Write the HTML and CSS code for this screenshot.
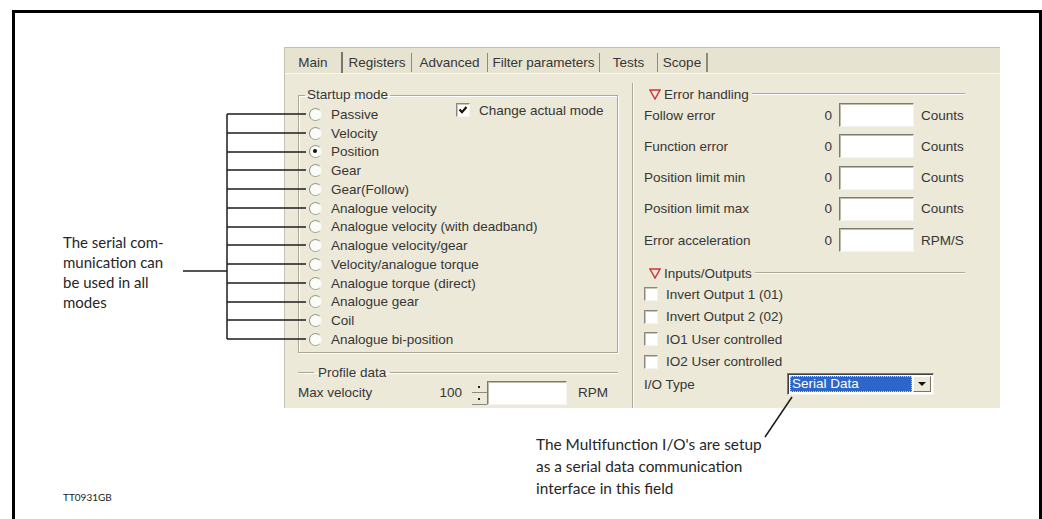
FILE: index.html
```html
<!DOCTYPE html>
<html lang="en">

<head>
   <meta charset="UTF-8">
   <meta name="viewport" content="width=device-width, initial-scale=1.0">
   <title>TT0931GB - Serial data setup</title>
   <link rel="stylesheet" href="styles.css">
</head>

<body>
   <div class="frame">
      <div class="figure">
         <p class="note note-left">The serial com-<br>munication can<br>be used in all<br>modes</p>

         <div class="dialog">
            <div class="tabs">
               <span class="tab tab-main">Main</span>
               <span class="tab tab-reg">Registers</span>
               <span class="tab tab-adv">Advanced</span>
               <span class="tab tab-filter">Filter parameters</span>
               <span class="tab tab-tests">Tests</span>
               <span class="tab tab-scope">Scope</span>
            </div>

            <div class="pages">
               <div class="col-left">
                  <fieldset class="group startup">
                     <legend>Startup mode</legend>
                     <div class="startup-grid">
                        <ul class="radios">
                           <li><span class="radio"></span>Passive</li>
                           <li><span class="radio"></span>Velocity</li>
                           <li><span class="radio on"></span>Position</li>
                           <li><span class="radio"></span>Gear</li>
                           <li><span class="radio"></span>Gear(Follow)</li>
                           <li><span class="radio"></span>Analogue velocity</li>
                           <li><span class="radio"></span>Analogue velocity (with deadband)</li>
                           <li><span class="radio"></span>Analogue velocity/gear</li>
                           <li><span class="radio"></span>Velocity/analogue torque</li>
                           <li><span class="radio"></span>Analogue torque (direct)</li>
                           <li><span class="radio"></span>Analogue gear</li>
                           <li><span class="radio"></span>Coil</li>
                           <li><span class="radio"></span>Analogue bi-position</li>
                        </ul>
                        <div class="check check-mode">
                           <span class="box">
                              <svg width="10" height="10" viewBox="0 0 10 10"><path d="M1.5 4.5 L4 7.2 L8.5 2" fill="none" stroke="#111" stroke-width="2.2"/></svg>
                           </span>
                           Change actual mode
                        </div>
                     </div>
                  </fieldset>

                  <fieldset class="group profile">
                     <legend>Profile data</legend>
                     <div class="prof-row">
                        <span class="prof-label">Max velocity</span>
                        <span class="prof-val">100</span>
                        <span class="spin"><i class="up"></i><i class="down"></i></span>
                        <span class="field field-prof"></span>
                        <span class="prof-unit">RPM</span>
                     </div>
                  </fieldset>
               </div>

               <div class="col-right">
                  <div class="heading">
                     <svg class="tri" width="12" height="11" viewBox="0 0 12 11"><polygon points="1,1 11,1 6,10" fill="none" stroke="#d0303a" stroke-width="1.4"/></svg>
                     <span>Error handling</span>
                     <span class="rule"></span>
                  </div>

                  <div class="rows">
                     <div class="row"><span class="lbl">Follow error</span><span class="val">0</span><span class="field"></span><span class="unit">Counts</span></div>
                     <div class="row"><span class="lbl">Function error</span><span class="val">0</span><span class="field"></span><span class="unit">Counts</span></div>
                     <div class="row"><span class="lbl">Position limit min</span><span class="val">0</span><span class="field"></span><span class="unit">Counts</span></div>
                     <div class="row"><span class="lbl">Position limit max</span><span class="val">0</span><span class="field"></span><span class="unit">Counts</span></div>
                     <div class="row"><span class="lbl">Error acceleration</span><span class="val">0</span><span class="field"></span><span class="unit">RPM/S</span></div>
                  </div>

                  <div class="heading heading-io">
                     <svg class="tri" width="12" height="11" viewBox="0 0 12 11"><polygon points="1,1 11,1 6,10" fill="none" stroke="#d0303a" stroke-width="1.4"/></svg>
                     <span>Inputs/Outputs</span>
                     <span class="rule"></span>
                  </div>

                  <ul class="checks">
                     <li><span class="box"></span>Invert Output 1 (01)</li>
                     <li><span class="box"></span>Invert Output 2 (02)</li>
                     <li><span class="box"></span>IO1 User controlled</li>
                     <li><span class="box"></span>IO2 User controlled</li>
                  </ul>

                  <div class="io-row">
                     <span class="io-label">I/O Type</span>
                     <span class="combo">
                        <span class="combo-sel">Serial Data</span>
                        <span class="combo-btn"><i></i></span>
                     </span>
                  </div>
               </div>
            </div>
         </div>
      </div>

      <div class="foot">
         <span class="fig-id">TT0931GB</span>
         <p class="note note-right">The Multifunction I/O's are setup<br>as a serial data communication<br>interface in this field</p>
      </div>
   </div>

   <!-- callout lines drawn over the figure -->
   <svg class="callouts" width="1042" height="519" viewBox="0 0 1042 519">
      <g stroke="#1c1c1c" stroke-width="1.5" fill="none">
         <path d="M227 114 V339"/>
         <path d="M183 271 H227"/>
         <path d="M227 114 H306 M227 133 H306 M227 152 H306 M227 170 H306 M227 189 H306 M227 208 H306 M227 227 H306"/>
         <path d="M227 245 H306 M227 264 H306 M227 283 H306 M227 302 H306 M227 320 H306 M227 339 H306"/>
         <path d="M792 397 L765 437"/>
      </g>
   </svg>
</body>

</html>
```

FILE: styles.css
```css
html,
body {
   margin: 0;
   height: 519px;
   overflow: hidden;
   background: #fff;
   font-family: Lato, 'Open Sans', sans-serif;
}

body {
   position: relative;
}

.frame {
   margin: 10px 0 0 12px;
   width: 1030px;
   height: 509px;
   box-sizing: border-box;
   border: 3px solid #000;
   border-bottom: 0;
}

.figure {
   display: grid;
   grid-template-columns: 269px 716px;
   padding-top: 34px;
}

.note {
   margin: 0;
   color: #262626;
   font-size: 15px;
}

.note-left {
   margin: 185px 0 0 48px;
   line-height: 20px;
}

.foot {
   display: flex;
   margin-top: 25px;
}

.fig-id {
   box-sizing: border-box;
   width: 521px;
   padding: 57px 0 0 48px;
   font-size: 10px;
   line-height: 14px;
   color: #222;
}

.note-right {
   font-size: 15.4px;
   line-height: 22px;
}

.callouts {
   position: absolute;
   top: 0;
   left: 0;
   pointer-events: none;
}

/* dialog */

.dialog {
   box-sizing: border-box;
   height: 361px;
   background: #ece9d8;
   border-top: 1px solid #c4c1b0;
   border-left: 1px solid #c4c1b0;
   font-family: 'Liberation Sans', Arial, sans-serif;
   font-size: 13.5px;
   color: #363636;
}

.tabs {
   display: flex;
   height: 25px;
   background: #e6e3d1;
   border-bottom: 1px solid #faf8f0;
}

.tab {
   display: flex;
   align-items: center;
   justify-content: center;
   box-sizing: border-box;
   height: 19px;
   margin-top: 5px;
   border-right: 1px solid #8e8b7d;
   white-space: nowrap;
}

.tab-main {
   width: 58px;
   height: 21px;
   margin-top: 4px;
   border-right: 2px solid #77756a;
}

.tab-reg { width: 69px; }
.tab-adv { width: 76px; }
.tab-filter { width: 112px; }
.tab-tests { width: 58px; }
.tab-scope { width: 50px; border-right-width: 2px; }

.pages {
   display: flex;
   height: 334px;
}

.col-left {
   width: 347px;
}

.group {
   box-sizing: border-box;
   width: 320px;
   min-width: 0;
   margin: 0 0 0 13px;
}

.group legend {
   line-height: 16px;
}

.startup {
   margin-top: 13px;
   padding: 2px 0 3px 10px;
   border: 1px solid #aaa797;
   box-shadow: inset 1px 1px #fff, 1px 1px #fff;
}

.startup legend {
   margin-left: -4px;
   padding: 0 2px;
}

.startup-grid {
   display: grid;
   grid-template-columns: 147px auto;
}

.radios {
   margin: 0;
   padding: 0;
   list-style: none;
}

.radios li {
   display: flex;
   align-items: center;
   height: 18.75px;
   white-space: nowrap;
}

.radio {
   position: relative;
   flex: none;
   box-sizing: border-box;
   width: 13px;
   height: 13px;
   margin-right: 9px;
   border-radius: 50%;
   border: 1.5px solid;
   border-color: #9a988a #f2f1ea #a6a496 #8a887a;
   background: #fbfbf7;
}

.radio.on::after {
   content: '';
   position: absolute;
   top: 3px;
   left: 3px;
   width: 4px;
   height: 4px;
   border-radius: 50%;
   background: #111;
}

.check {
   display: flex;
   align-items: center;
   white-space: nowrap;
}

.check-mode {
   align-self: start;
   height: 14px;
   margin-top: -2px;
}

.box {
   display: flex;
   flex: none;
   align-items: center;
   justify-content: center;
   box-sizing: border-box;
   width: 14px;
   height: 14px;
   margin-right: 9px;
   background: #fff;
   border: 1px solid;
   border-color: #8a887a #f4f3ee #f4f3ee #8a887a;
   box-shadow: inset 1px 1px #c9c6b7;
}

.profile {
   margin-top: 12px;
   padding: 0;
   border: 0;
   border-top: 1px solid #aaa797;
   box-shadow: inset 0 1px #fff;
}

.profile legend {
   margin-left: 16px;
   padding: 0 4px;
}

.prof-row {
   display: flex;
   align-items: center;
   height: 24px;
}

.prof-label {
   width: 140px;
}

.prof-val {
   width: 24px;
   text-align: right;
}

.spin {
   display: flex;
   flex-direction: column;
   width: 15px;
   height: 24px;
   margin-left: 10px;
}

.spin i {
   flex: 1;
   position: relative;
   border-bottom: 1px solid #8e8b7d;
}

.spin i::after {
   content: '';
   position: absolute;
   left: 6px;
   top: 5px;
   width: 2px;
   height: 2px;
   background: #222;
}

.field {
   box-sizing: border-box;
   width: 75px;
   height: 24px;
   margin-left: 7px;
   background: #fff;
   border: 1px solid;
   border-color: #7d7b6e #f4f3ee #f4f3ee #7d7b6e;
   box-shadow: inset 1px 1px #c0bdae;
}

.field-prof {
   width: 80px;
   margin-left: 0;
}

.prof-unit {
   margin-left: 11px;
}

.col-right {
   flex: 1;
   margin-top: 9px;
   padding: 3px 35px 0 11px;
   border-left: 1px solid #aca899;
   box-shadow: inset 1px 0 #fff;
}

.heading {
   display: flex;
   align-items: center;
   height: 16px;
   margin-left: 5px;
   white-space: nowrap;
}

.tri {
   margin-right: 3px;
}

.rule {
   flex: 1;
   margin-left: 3px;
   border-top: 1px solid #aca899;
   border-bottom: 1px solid #fff;
}

.rows {
   display: flex;
   flex-direction: column;
   gap: 7.25px;
   margin-top: 1px;
}

.row {
   display: flex;
   align-items: center;
   height: 24px;
}

.lbl {
   width: 176px;
}

.val {
   width: 12px;
   text-align: right;
}

.unit {
   margin-left: 7px;
}

.heading-io {
   margin-top: 13px;
}

.checks {
   margin: 2px 0 0;
   padding: 0;
   list-style: none;
}

.checks li {
   display: flex;
   align-items: center;
   height: 22.5px;
   white-space: nowrap;
}

.checks .box {
   margin-right: 8px;
}

.io-row {
   display: flex;
   align-items: center;
   height: 22px;
}

.io-label {
   width: 143px;
}

.combo {
   display: flex;
   box-sizing: border-box;
   width: 147px;
   height: 22px;
   padding: 2px;
   background: #fff;
   border: 1px solid;
   border-color: #7d7b6e #f4f3ee #f4f3ee #7d7b6e;
   box-shadow: inset 1px 1px #404040;
}

.combo-sel {
   flex: 1;
   padding-left: 2px;
   background: #2d66c8;
   color: #fff;
   line-height: 16px;
   outline: 1px dotted #c8d4ee;
   outline-offset: -1px;
}

.combo-btn {
   display: flex;
   align-items: center;
   justify-content: center;
   box-sizing: border-box;
   width: 18px;
   margin-left: 1px;
   background: #ece9d8;
   border: 1px solid;
   border-color: #fff #77756a #77756a #fff;
}

.combo-btn i {
   width: 0;
   height: 0;
   border-left: 4px solid transparent;
   border-right: 4px solid transparent;
   border-top: 4px solid #111;
}
```
